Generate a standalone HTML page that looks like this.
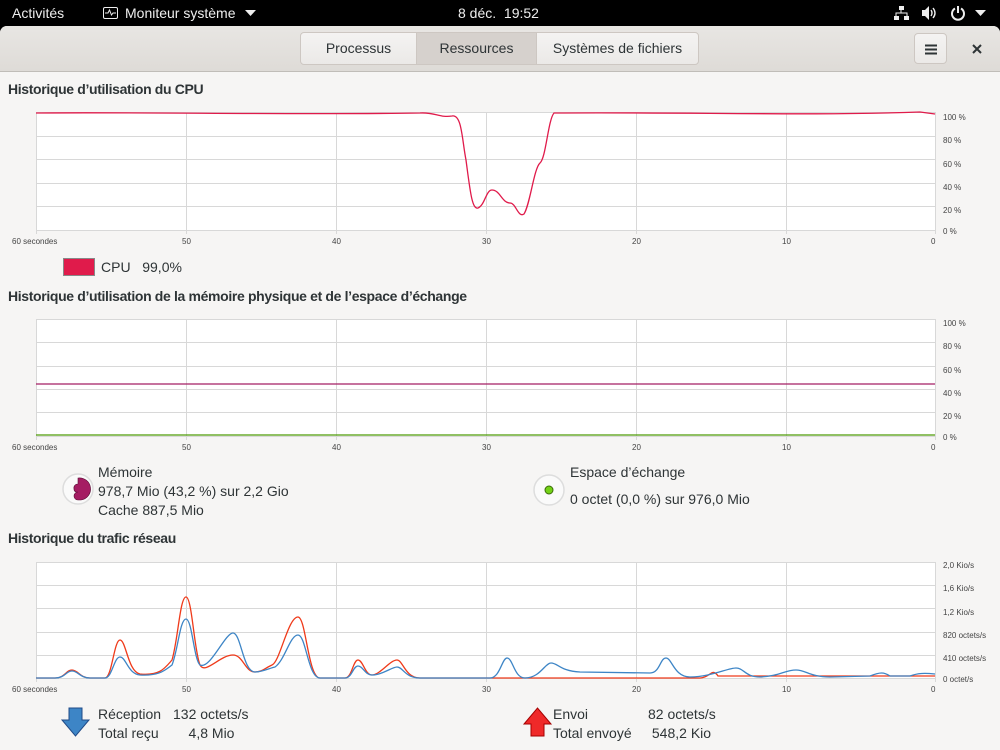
<!DOCTYPE html>
<html><head><meta charset="utf-8"><style>
*{margin:0;padding:0;box-sizing:border-box}
body{width:1000px;height:750px;overflow:hidden;background:#000;font-family:"Liberation Sans","DejaVu Sans",sans-serif;position:relative}
.top{position:absolute;left:0;top:0;width:1000px;height:26px;background:#000;color:#eee;font-size:14px}
.top span{position:absolute;top:5px}
.win{position:absolute;left:0;top:26px;width:1000px;height:724px;background:#f6f5f4;border-radius:7px 7px 0 0;overflow:hidden}
.hb{position:absolute;left:0;top:0;width:1000px;height:46px;background:linear-gradient(#e8e6e3,#dedbd7);border-bottom:1px solid #c0bdb8}
.tab{position:absolute;top:6px;height:33px;border:1px solid #cdc7c2;font-size:14px;color:#2e3436;text-align:center;line-height:31px;background:linear-gradient(#f4f3f2,#ebe9e7)}
.h{position:absolute;left:8px;font-size:14px;font-weight:bold;color:#2e3436;letter-spacing:-0.35px}
.t{position:absolute;font-size:14px;color:#2e3436;line-height:19px}
</style></head><body>
<div class="top">
<span style="left:12px">Activités</span>
<svg style="position:absolute;left:103px;top:7px" width="15" height="12"><rect x="0.5" y="0.5" width="14" height="11" rx="1.5" fill="none" stroke="#eee"/><path d="M2 6h3l1.5-3 2 5 1.5-2h3" fill="none" stroke="#eee"/></svg>
<span style="left:125px">Moniteur système</span>
<svg style="position:absolute;left:245px;top:10px" width="11" height="7"><path d="M0 0h11l-5.5 6z" fill="#eee"/></svg>
<span style="left:458px">8 déc.&nbsp; 19:52</span>
<svg style="position:absolute;left:894px;top:6px" width="16" height="15" fill="#eee"><rect x="5" y="0" width="5" height="4"/><rect x="0" y="10" width="5" height="4"/><rect x="10" y="10" width="5" height="4"/><path d="M7 4v3M2 10V7h11v3" stroke="#eee" fill="none"/></svg>
<svg style="position:absolute;left:922px;top:6px" width="16" height="14"><path d="M0 4h3l4-4v14l-4-4H0z" fill="#eee"/><path d="M9 4q2 3 0 6M11 2q4 5 0 10" stroke="#eee" fill="none" stroke-width="1.4"/></svg>
<svg style="position:absolute;left:950px;top:5px" width="16" height="16"><path d="M5 3.5a6 6 0 1 0 6 0" fill="none" stroke="#eee" stroke-width="2"/><path d="M8 1v7" stroke="#eee" stroke-width="2"/></svg>
<svg style="position:absolute;left:975px;top:10px" width="11" height="7"><path d="M0 0h11l-5.5 6z" fill="#eee"/></svg>
</div>
<div class="win">
<div class="hb">
<div class="tab" style="left:300px;width:117px;border-radius:4px 0 0 4px">Processus</div>
<div class="tab" style="left:416px;width:121px;background:#d6d1cd">Ressources</div>
<div class="tab" style="left:536px;width:163px;border-radius:0 4px 4px 0">Systèmes de fichiers</div>
<div class="tab" style="left:914px;width:33px;border-radius:4px;top:7px;height:31px"><svg width="12" height="11" style="margin-top:10px"><path d="M0 1.5h12M0 5.5h12M0 9.5h12" stroke="#2e3436" stroke-width="2"/></svg></div>
<svg style="position:absolute;left:972px;top:18px" width="10" height="10"><path d="M1 1l8 8M9 1l-8 8" stroke="#2e3436" stroke-width="2"/></svg>
</div>
<div class="h" style="top:55px">Historique d’utilisation du CPU</div>
<div class="h" style="top:262px">Historique d’utilisation de la mémoire physique et de l’espace d’échange</div>
<div class="h" style="top:504px">Historique du trafic réseau</div>
</div>
<svg style="position:absolute;left:0;top:0" width="1000" height="750" font-family="Liberation Sans,sans-serif" font-size="8" fill="#444">
<g stroke="#d8d8d8" fill="#fff">
<rect x="36.5" y="112.5" width="899" height="118"/>
<rect x="36.5" y="319.5" width="899" height="117"/>
<rect x="36.5" y="562.5" width="899" height="116"/>
</g>
<g stroke="#d8d8d8">
<path d="M186.5 112v118M336.5 112v118M486.5 112v118M636.5 112v118M786.5 112v118M36 136.5h900M36 159.5h900M36 183.5h900M36 206.5h900"/>
<path d="M186.5 319v117M336.5 319v117M486.5 319v117M636.5 319v117M786.5 319v117M36 342.5h900M36 366.5h900M36 389.5h900M36 412.5h900"/>
<path d="M186.5 562v116M336.5 562v116M486.5 562v116M636.5 562v116M786.5 562v116M36 585.5h900M36 608.5h900M36 632.5h900M36 655.5h900"/>
<path d="M36.5 230v4M186.5 230v4M336.5 230v4M486.5 230v4M636.5 230v4M786.5 230v4M935.5 230v4M36.5 436v4M186.5 436v4M336.5 436v4M486.5 436v4M636.5 436v4M786.5 436v4M935.5 436v4M36.5 678v4M186.5 678v4M336.5 678v4M486.5 678v4M636.5 678v4M786.5 678v4M935.5 678v4"/>
</g>
<path d="M36 113 C150 112 300 115 420 113 C435 112 440 118 452 116 C462 114 462 140 466 160 C470 190 472 210 478 208 C485 205 486 190 492 190 C500 190 502 203 510 203 C516 203 518 218 524 214 C530 205 534 168 540 163 C546 158 548 120 554 113 C700 112 800 116 920 112 L935 114" fill="none" stroke="#e01b4b" stroke-width="1.3"/>
<path d="M36 384 L935 384" stroke="#a51d63" stroke-width="1.3"/>
<path d="M36 435 L935 435" stroke="#4e9a06" stroke-width="1.3"/>
<path d="M36 678 L55 678 C65 678 66 670 72 670 C78 670 80 678 90 678 L105 678 C112 678 114 640 120 640 C126 640 128 672 140 674 C160 676 165 668 172 660 C178 640 180 597 186 597 C192 597 194 650 200 665 C205 675 220 655 233 655 C243 655 245 672 255 672 C262 672 265 668 272 665 C280 662 288 617 298 617 C306 617 308 678 320 678 L345 678 C352 678 353 660 358 660 C363 660 365 675 372 675 C380 675 390 660 397 660 C403 660 405 678 420 678 L700 678 C710 678 712 667 718 676 L935 676" fill="none" stroke="#ef3a1a" stroke-width="1.3"/>
<path d="M36 678 L55 678 C65 678 66 671 72 671 C78 671 80 678 90 678 L105 678 C112 678 114 657 120 657 C126 657 128 674 140 675 C160 676 165 670 172 665 C178 650 180 619 186 619 C192 619 194 660 200 665 C210 670 225 633 233 633 C241 633 243 672 255 672 C262 672 270 668 275 667 C285 660 290 635 298 635 C306 635 308 678 320 678 L345 678 C352 678 353 666 358 666 C363 666 365 675 372 675 C382 675 392 667 397 667 C403 667 405 678 420 678 L490 678 C500 678 502 658 507 658 C513 658 514 678 525 678 C540 678 545 663 551 663 C558 663 560 671 580 672 L650 673 C660 673 660 658 666 658 C672 658 674 677 690 677 C710 677 728 668 736 668 C744 668 745 677 760 677 C780 676 785 670 796 670 C806 670 810 677 830 677 L870 676 C880 672 884 672 890 676 L910 676 C918 673 925 673 935 674" fill="none" stroke="#3d85c6" stroke-width="1.3"/>
<g font-size="8">
<text x="12" y="244">60 secondes</text><text x="182" y="244">50</text><text x="332" y="244">40</text><text x="482" y="244">30</text><text x="632" y="244">20</text><text x="782" y="244">10</text><text x="931" y="244">0</text>
<text x="12" y="450">60 secondes</text><text x="182" y="450">50</text><text x="332" y="450">40</text><text x="482" y="450">30</text><text x="632" y="450">20</text><text x="782" y="450">10</text><text x="931" y="450">0</text>
<text x="12" y="692">60 secondes</text><text x="182" y="692">50</text><text x="332" y="692">40</text><text x="482" y="692">30</text><text x="632" y="692">20</text><text x="782" y="692">10</text><text x="931" y="692">0</text>
<text x="943" y="120">100 %</text><text x="943" y="143">80 %</text><text x="943" y="167">60 %</text><text x="943" y="190">40 %</text><text x="943" y="213">20 %</text><text x="943" y="234">0 %</text>
<text x="943" y="326">100 %</text><text x="943" y="349">80 %</text><text x="943" y="373">60 %</text><text x="943" y="396">40 %</text><text x="943" y="419">20 %</text><text x="943" y="440">0 %</text>
<text x="943" y="568">2,0 Kio/s</text><text x="943" y="591">1,6 Kio/s</text><text x="943" y="615">1,2 Kio/s</text><text x="943" y="638">820 octets/s</text><text x="943" y="661">410 octets/s</text><text x="943" y="682">0 octet/s</text>
</g>
<rect x="63.5" y="258.5" width="31" height="17" fill="#e01b4b" stroke="#888"/>
<circle cx="78" cy="489" r="15" fill="#fafafa" stroke="#ddd" stroke-width="1.5"/>
<path d="M78 478 A11 11 0 0 1 81 500 L78 500 A4 4 0 0 1 78 492 A3 3 0 0 1 74 489 A4 4 0 0 1 78 484 Z" fill="#a51d63" stroke="#5a0f35" stroke-width="0.6"/>
<circle cx="549" cy="490" r="15" fill="#fafafa" stroke="#ddd" stroke-width="1.5"/>
<circle cx="549" cy="490" r="4" fill="#73d216" stroke="#3a6b0a"/>
<path d="M69 708h13v12h7l-13.5 16-13.5-16h7z" fill="#3d85c6" stroke="#204a87"/>
<path d="M531 736h13v-12h7l-13.5-16-13.5 16h7z" fill="#ef2929" stroke="#a40000"/>
</svg>
<div class="t" style="left:101px;top:258px">CPU&nbsp;&nbsp; 99,0%</div>
<div class="t" style="left:98px;top:463px">Mémoire<br>978,7 Mio (43,2 %) sur 2,2 Gio<br>Cache 887,5 Mio</div>
<div class="t" style="left:570px;top:463px">Espace d’échange</div>
<div class="t" style="left:570px;top:490px">0 octet (0,0 %) sur 976,0 Mio</div>
<div class="t" style="left:98px;top:705px">Réception<br>Total reçu</div>
<div class="t" style="left:173px;top:705px">132 octets/s<br>&nbsp;&nbsp;&nbsp;&nbsp;4,8 Mio</div>
<div class="t" style="left:553px;top:705px">Envoi<br>Total envoyé</div>
<div class="t" style="left:648px;top:705px">82 octets/s<br>&nbsp;548,2 Kio</div>
</body></html>
